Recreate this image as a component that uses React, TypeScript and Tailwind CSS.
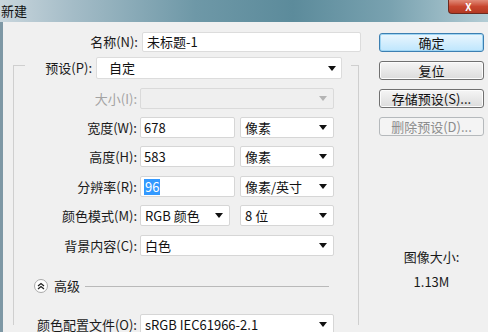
import type { ReactNode } from 'react';

const FONT = { fontFamily: '"Noto Sans CJK SC", "Noto Sans", sans-serif' };

function Arrow({ disabled }: { disabled?: boolean }) {
  return (
    <svg width="8" height="5" viewBox="0 0 8 5" className="shrink-0">
      <polygon points="0,0 8,0 4,5" fill={disabled ? '#b4b4b4' : '#111'} />
    </svg>
  );
}

function TextBox({ w, children }: { w: string; children?: ReactNode }) {
  return (
    <div className={`${w} h-[21px] bg-white border border-[#d6d6d6] rounded-[2px] flex items-center pl-[3px] text-[#111]`}>
      {children}
    </div>
  );
}

function Select({ w, value, disabled }: { w: string; value?: string; disabled?: boolean }) {
  return (
    <div
      className={`${w} h-[21px] border rounded-[2px] flex items-center justify-between pl-[4px] pr-[6px] ${
        disabled ? 'bg-[#efefef] border-[#dadada]' : 'bg-white border-[#d6d6d6] text-[#111]'
      }`}
    >
      <span>{value}</span>
      <Arrow disabled={disabled} />
    </div>
  );
}

// labels line up so their colons end just left of the fields at x≈140
function Row({ label, mt, disabled, children }: { label: string; mt: string; disabled?: boolean; children: ReactNode }) {
  return (
    <div className={`flex items-center ${mt}`}>
      <div className={`w-[126px] text-right pr-[3px] ${disabled ? 'text-[#a3a3a3]' : 'text-[#1a1a1a]'}`}>{label}</div>
      <div className="flex items-center gap-[5px]">{children}</div>
    </div>
  );
}

function Button({ children, primary, disabled, mt }: { children: ReactNode; primary?: boolean; disabled?: boolean; mt: string }) {
  const tone = primary
    ? 'border-[#3c7fb1] bg-gradient-to-b from-[#eaf6fd] to-[#bee6fd] text-[#111] shadow-[inset_0_0_0_1px_#9fd5f3]'
    : disabled
    ? 'border-[#b5b9bc] bg-[#f4f4f4] text-[#8d8d8d]'
    : 'border-[#707070] bg-gradient-to-b from-[#f5f5f5] to-[#dcdcdc] text-[#111] shadow-[inset_0_0_0_1px_#fcfcfc]';
  return (
    <div className={`${mt} h-[19px] w-[105px] border rounded-[3px] flex items-center justify-center ${tone}`}>
      {children}
    </div>
  );
}

export default function App() {
  return (
    <div className="w-[488px] h-[332px] overflow-hidden bg-[#f0f0f0] text-[13px] leading-[16px]" style={FONT}>
      {/* Title bar */}
      <div className="h-[22px] flex items-start justify-between bg-[linear-gradient(90deg,#c9d6dd_0%,#a4bcc7_15%,#6e98a7_40%,#5c8b9b_60%,#79a2b0_80%,#b4cdd5_100%)]">
        <span className="pt-[3px] pl-[1px] text-[#111]">新建</span>
        <div className="w-[40px] h-[14px] rounded-bl-[4px] border border-t-0 border-r-0 border-[#6b2a1f] bg-gradient-to-b from-[#e08a78] via-[#c8462f] to-[#b33a23] flex items-center justify-center text-white text-[10px] font-bold leading-[12px]">
          X
        </div>
      </div>

      <div className="flex h-[310px] border-l-[3px] border-[#7e98a5]">
        {/* Left form */}
        <div className="w-[369px]">
          <div className="flex items-center mt-[10px]">
            <div className="w-[137px] text-right pr-[2px] text-[#1a1a1a]">名称(N):</div>
            <div className="ml-[2px] w-[219px] h-[20px] bg-white border border-[#dcdcdc] rounded-[2px] flex items-center pl-[4px] text-[#111]">
              未标题-1
            </div>
          </div>

          {/* group box */}
          <div className="mt-[13px] ml-[10px] w-[346px] h-[260px] border border-b-0 border-[#cfcfcf]">
            <div className="-mt-[9px] ml-[11px] w-[326px] bg-[#f0f0f0] flex items-center pr-[8px]">
              <div className="w-[69px] text-right pr-[2px] text-[#1a1a1a]">预设(P):</div>
              <div className="ml-[2px] w-[246px] h-[22px] bg-white border border-[#dcdcdc] rounded-[2px] flex items-center justify-between pl-[12px] pr-[5px] text-[#111]">
                <span>自定</span>
                <Arrow />
              </div>
            </div>

            <Row label="大小(I):" mt="mt-[9px]" disabled>
              <Select w="w-[194px]" disabled />
            </Row>
            <Row label="宽度(W):" mt="mt-[8px]">
              <TextBox w="w-[95px]">678</TextBox>
              <Select w="w-[94px]" value="像素" />
            </Row>
            <Row label="高度(H):" mt="mt-[8px]">
              <TextBox w="w-[95px]">583</TextBox>
              <Select w="w-[94px]" value="像素" />
            </Row>
            <Row label="分辨率(R):" mt="mt-[9px]">
              <TextBox w="w-[95px]">
                <span className="bg-[#3399ff] text-white px-[1px]">96</span>
              </TextBox>
              <Select w="w-[94px]" value="像素/英寸" />
            </Row>
            <Row label="颜色模式(M):" mt="mt-[8px]">
              <div className="flex items-center gap-[10px]">
                <Select w="w-[90px]" value="RGB 颜色" />
                <Select w="w-[94px]" value="8 位" />
              </div>
            </Row>
            <Row label="背景内容(C):" mt="mt-[9px]">
              <Select w="w-[194px]" value="白色" />
            </Row>

            <div className="mt-[22px] ml-[20px] flex items-center h-[16px]">
              <div className="w-[14px] h-[14px] rounded-full bg-white border border-[#a9a9a9] flex items-center justify-center">
                <svg width="8" height="8" viewBox="0 0 8 8">
                  <path d="M1 4 L4 1.5 L7 4 M1 7 L4 4.5 L7 7" fill="none" stroke="#222" strokeWidth="1.3" />
                </svg>
              </div>
              <span className="ml-[6px] text-[#1a1a1a]">高级</span>
              <div className="ml-[5px] w-[244px] h-px bg-[#b9b9b9]" />
            </div>

            <Row label="颜色配置文件(O):" mt="mt-[20px]">
              <Select w="w-[194px]" value="sRGB IEC61966-2.1" />
            </Row>
          </div>
        </div>

        {/* Right column */}
        <div className="ml-[7px] w-[105px] flex flex-col">
          <Button primary mt="mt-[11px]">确定</Button>
          <Button mt="mt-[9px]">复位</Button>
          <Button mt="mt-[9px]">存储预设(S)...</Button>
          <Button disabled mt="mt-[9px]">删除预设(D)...</Button>
          <div className="mt-[113px] text-center text-[#1a1a1a]">图像大小:</div>
          <div className="mt-[9px] text-center text-[#1a1a1a]">1.13M</div>
        </div>
      </div>
    </div>
  );
}
